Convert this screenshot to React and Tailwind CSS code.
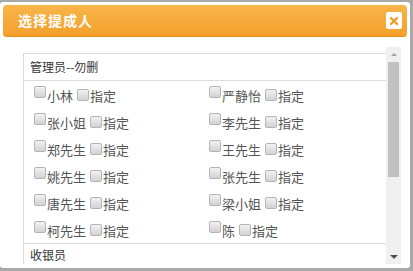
import React from 'react'

const rows = [
  ['小林', '严静怡'],
  ['张小姐', '李先生'],
  ['郑先生', '王先生'],
  ['姚先生', '张先生'],
  ['唐先生', '梁小姐'],
  ['柯先生', '陈'],
]

function Box() {
  return (
    <span className="inline-block w-[12px] h-[12px] rounded-[2px] border border-[#b4b4b4] bg-gradient-to-b from-[#f2f2f2] to-[#d2d2d2] shrink-0" />
  )
}

function Person({ name }) {
  return (
    <div className="flex items-start h-[27px] pt-[5px]">
      <Box />
      <span className="ml-[1px] mt-[2px] leading-[16px]">{name}</span>
      <span className="ml-[4px]"><Box /></span>
      <span className="ml-[1px] mt-[2px] leading-[16px]">指定</span>
    </div>
  )
}

export default function App() {
  return (
    <div
      className="w-[413px] h-[271px] bg-[#a9a9a9] pt-[2px] pr-[3px] pb-[3px] overflow-hidden"
      style={{ fontFamily: '"Noto Sans CJK SC", "Noto Sans", sans-serif' }}
    >
      <div className="h-full bg-white rounded-[3px] flex flex-col">
        {/* title bar */}
        <div className="mx-[3px] mt-[3px] h-[32px] rounded-[4px] bg-gradient-to-b from-[#f8b54a] to-[#f3a02a] border-b border-[#e3901c] flex items-center justify-between pl-[15px] pr-[5px]">
          <span className="text-white font-bold text-[14px] tracking-[1px]">选择提成人</span>
          <span className="w-[16px] h-[17px] bg-white rounded-[2px] flex items-center justify-center">
            <svg width="8" height="8" viewBox="0 0 8 8">
              <path d="M1 1L7 7M7 1L1 7" stroke="#f39a1e" strokeWidth="2.2" strokeLinecap="square" />
            </svg>
          </span>
        </div>

        {/* body */}
        <div className="flex pl-[23px] pr-[9px] mt-[10px] h-[217px]">
          <div className="flex-1 overflow-hidden">
            <div className="mt-[6px] border-l border-t border-[#dcdcdc] text-[13px] text-[#555]">
              <div className="h-[27px] flex items-center pl-[6px] text-[12px] text-[#333] border-b border-[#dcdcdc]">
                管理员--勿删
              </div>
              <div className="grid grid-cols-[175px_175px] pl-[10px]">
                {rows.map(([a, b]) => (
                  <React.Fragment key={a}>
                    <Person name={a} />
                    <Person name={b} />
                  </React.Fragment>
                ))}
              </div>
              <div className="h-[22px] pt-[3px] pl-[6px] text-[12px] leading-[16px] text-[#333] border-t border-[#dcdcdc]">
                收银员
              </div>
            </div>
          </div>

          {/* scrollbar */}
          <div className="w-[15px] bg-[#f0f0f0] flex flex-col items-center">
            <div className="h-[15px] flex items-center justify-center">
              <span className="w-0 h-0 border-l-[3px] border-r-[3px] border-b-[3px] border-transparent border-b-[#a0a0a0]" />
            </div>
            <div className="w-[11px] h-[115px] bg-[#c1c1c1]" />
            <div className="flex-1" />
            <div className="h-[15px] flex items-center justify-center">
              <span className="w-0 h-0 border-l-[4px] border-r-[4px] border-t-[4px] border-transparent border-t-[#505050]" />
            </div>
          </div>
        </div>
      </div>
    </div>
  )
}
